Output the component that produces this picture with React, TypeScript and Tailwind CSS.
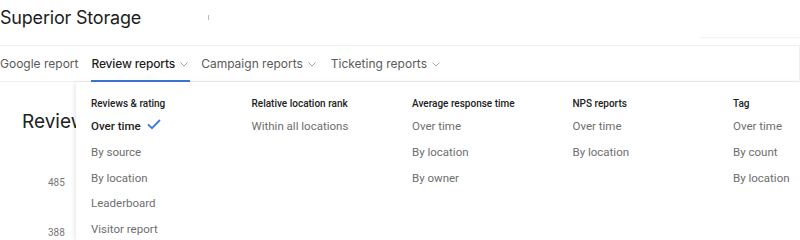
import React from "react";

const Chevron = () => (
  <svg width="8" height="5" viewBox="0 0 8 5" className="ml-[5px] mt-[2px]" fill="none">
    <path d="M0.5 0.5 L4 4 L7.5 0.5" stroke="#9a9a9a" strokeWidth="0.9" />
  </svg>
);

const Check = () => (
  <svg width="14" height="11" viewBox="0 0 14 11" className="ml-[6px]" fill="none">
    <path d="M1.5 5.8 L5 9.2 L12.5 1.5" stroke="#3d7bd9" strokeWidth="1.8" strokeLinecap="round" />
  </svg>
);

const columns: { title: string; items: string[] }[] = [
  { title: "Reviews & rating", items: ["Over time", "By source", "By location", "Leaderboard", "Visitor report"] },
  { title: "Relative location rank", items: ["Within all locations"] },
  { title: "Average response time", items: ["Over time", "By location", "By owner"] },
  { title: "NPS reports", items: ["Over time", "By location"] },
  { title: "Tag", items: ["Over time", "By count", "By location"] },
];

export default function App() {
  return (
    <div className="relative w-[800px] h-[240px] overflow-hidden bg-white font-['Inter',sans-serif]">
      {/* header */}
      <div className="h-[37px] flex items-center relative">
        <span className="text-[18px] text-[#1d1d1d] tracking-[-0.2px] leading-none mt-[-2px]">Superior Storage</span>
        <div className="absolute left-[208px] top-[15px] w-[1px] h-[5px] bg-[#bbb]" />
        <div className="absolute right-0 top-[37px] w-[100px] h-[1px] bg-[#f3f3f3]" />
      </div>
      {/* nav */}
      <div className="mt-[8px] h-[37px] border-y border-[#efefef] border-r flex items-stretch text-[12px] text-[#5a5a5a]">
        <div className="flex items-center pr-[13px]">Google report</div>
        <div className="relative flex items-center text-[#1f1f1f] font-medium pr-[2px] mr-[11px] tracking-[-0.15px]">
          <span>Review reports</span>
          <Chevron />
          <div className="absolute left-0 right-0 bottom-[-1px] h-[2px] bg-[#3d74d6]" />
        </div>
        <div className="flex items-center mr-[15px]">
          Campaign reports
          <Chevron />
        </div>
        <div className="flex items-center">
          Ticketing reports
          <Chevron />
        </div>
      </div>
      {/* background page */}
      <div className="absolute left-[22px] top-[108px] text-[19px] text-[#222]">Review</div>
      <div className="absolute left-[48px] top-[175px] text-[10px] text-[#777] font-['Roboto',sans-serif]">485</div>
      <div className="absolute left-[48px] top-[225px] text-[10px] text-[#777] font-['Roboto',sans-serif]">388</div>
      {/* dropdown */}
      <div className="absolute left-[76px] top-[82px] right-0 bottom-0 bg-white shadow-[-2px_0_4px_rgba(0,0,0,0.08)] font-['Roboto',sans-serif]">
        <div className="flex pl-[15px] pt-[16px]">
          {columns.map((col, ci) => (
            <div key={ci} className="w-[160.5px] shrink-0">
              <div className="text-[10px] font-medium text-[#222] leading-[12px] h-[12px]">{col.title}</div>
              <div className="mt-[9px] flex flex-col">
                {col.items.map((it, ii) => {
                  const active = ci === 0 && ii === 0;
                  return (
                    <div
                      key={ii}
                      className={`h-[25.75px] flex items-start text-[11.5px] leading-[14px] ${active ? "text-[#222] font-medium" : "text-[#6e6e6e]"}`}
                    >
                      {it}
                      {active && <Check />}
                    </div>
                  );
                })}
              </div>
            </div>
          ))}
        </div>
      </div>
    </div>
  );
}
